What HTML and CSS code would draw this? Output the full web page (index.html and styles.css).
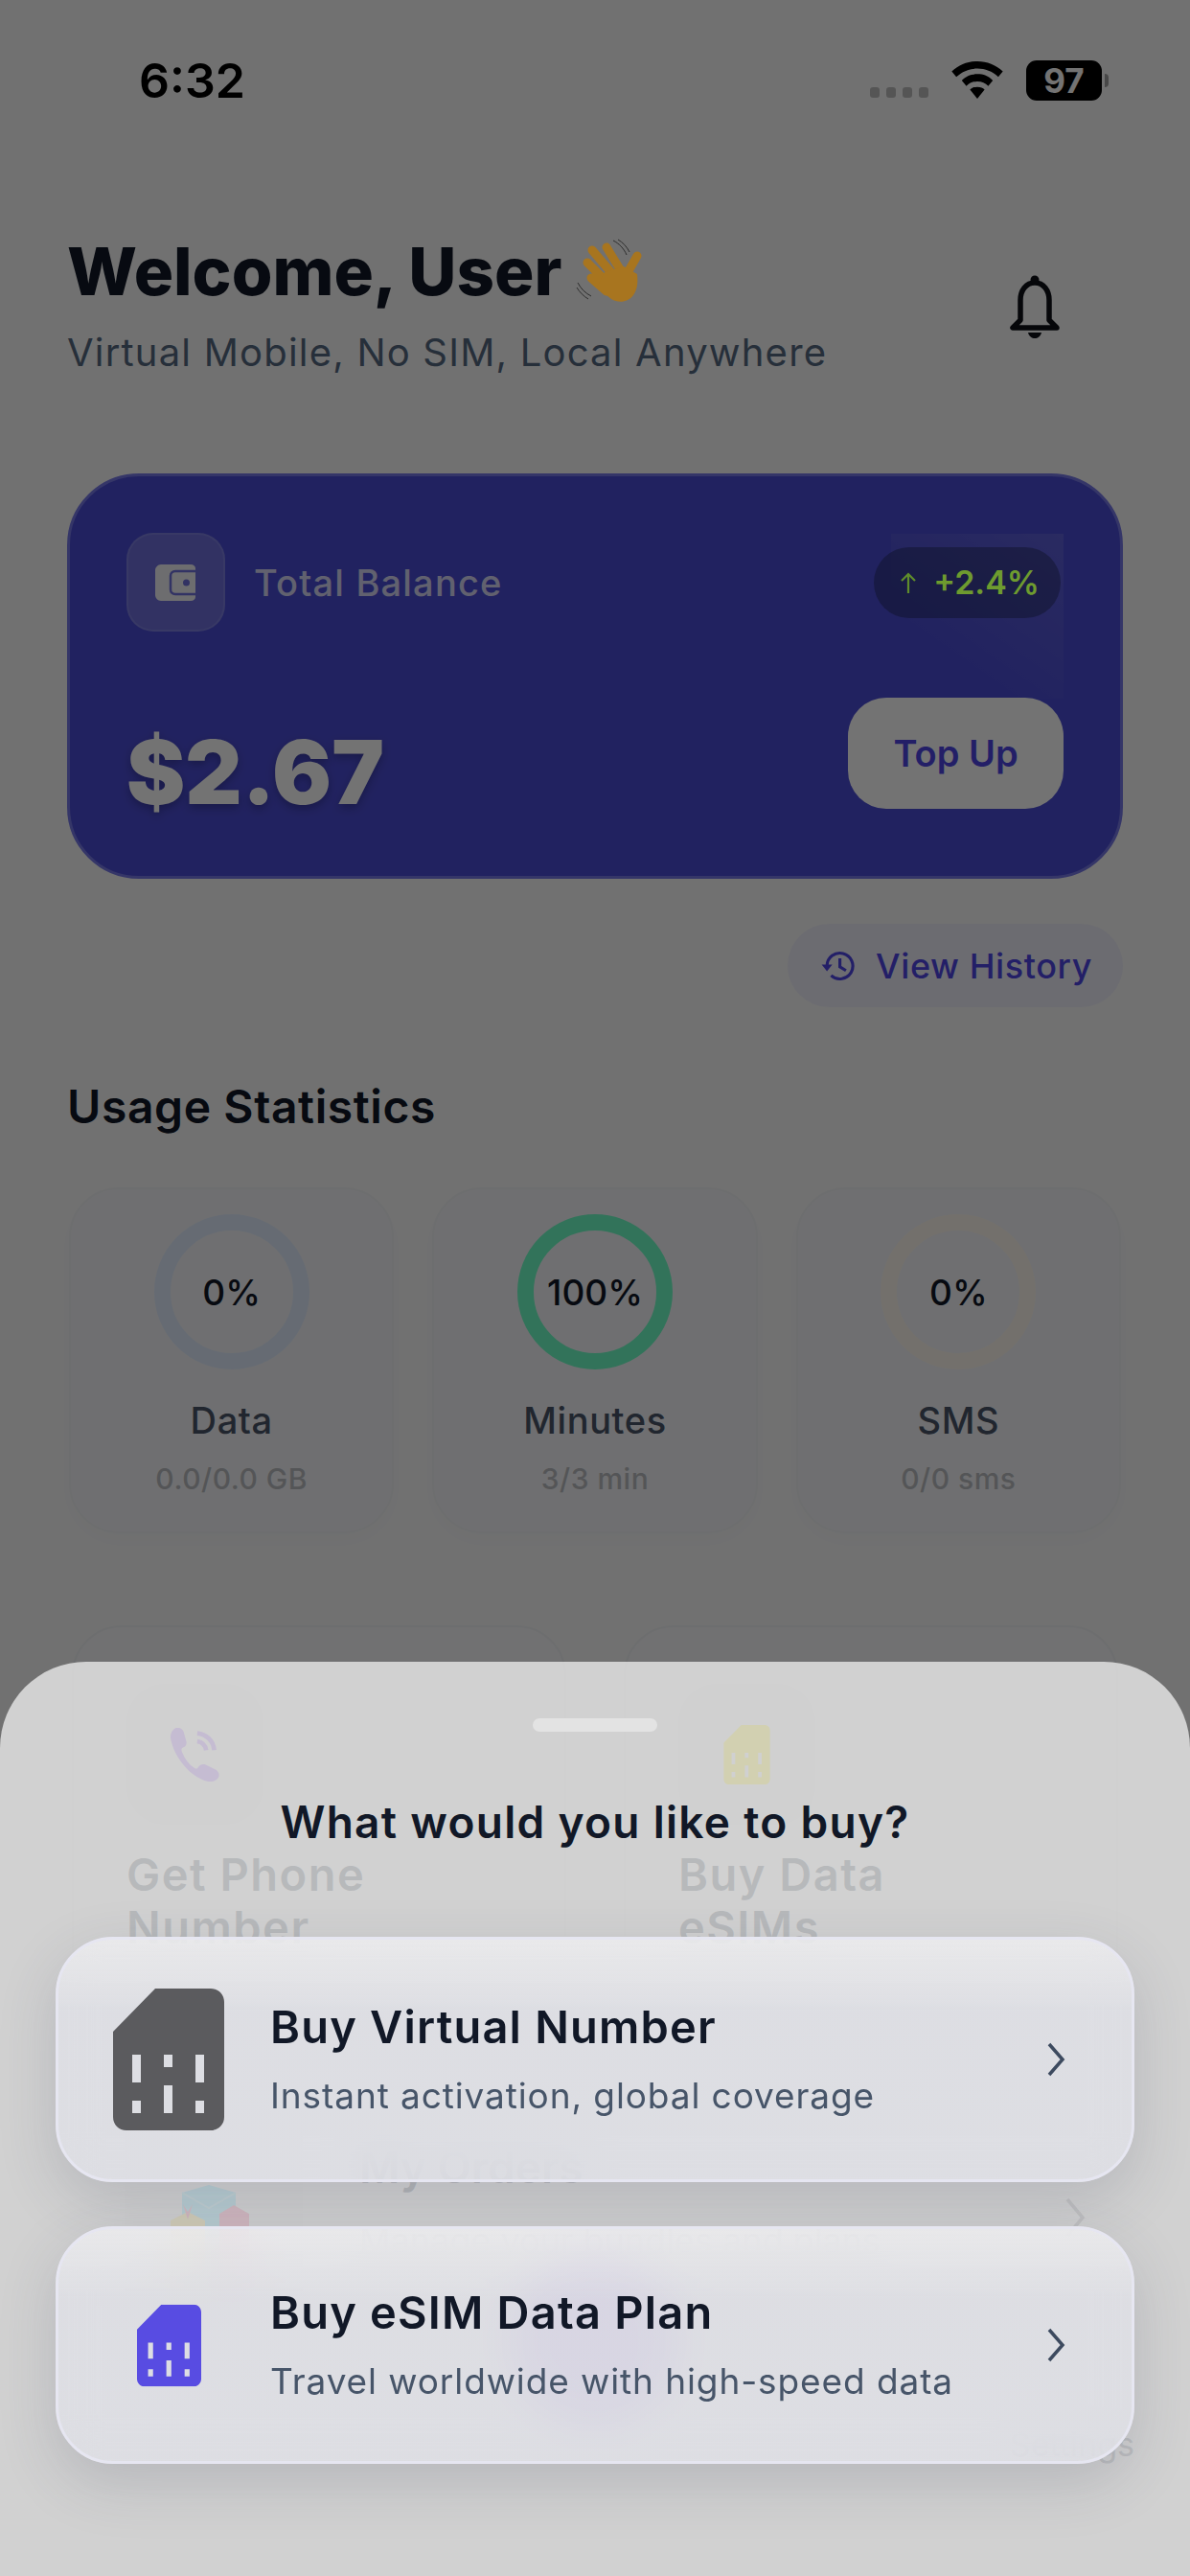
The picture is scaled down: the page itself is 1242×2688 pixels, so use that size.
FILE: index.html
```html
<!DOCTYPE html>
<html lang="en">
<head>
    <meta charset="UTF-8">
    <meta name="viewport" content="width=device-width, initial-scale=1.0">
    <title>Wallet Home</title>
    <link rel="stylesheet" href="styles.css">
</head>
<body>
    <svg class="defs" width="0" height="0">
        <symbol id="sim-shape" viewBox="0 0 116 148">
            <path fill-rule="evenodd" d="M44 0H102C110 0 116 6 116 14V134C116 142 110 148 102 148H14C6 148 0 142 0 134V45zM20 69V98H29V69zM53 69V82H62V69zM86 69V98H95V69zM53 101V130H62V101zM20 117V130H29V117zM86 117V130H95V117z"/>
        </symbol>
    </svg>

    <div class="page">
        <div class="status-bar">
            <span class="status-time">6:32</span>
            <div class="status-icons">
                <div class="signal-dots"><i></i><i></i><i></i><i></i></div>
                <svg class="wifi" viewBox="0 0 56 42"><path d="M28 0C17 0 8 4 0 11l5 6c7-6 14-9 23-9s16 3 23 9l5-6C48 4 39 0 28 0z"/><path d="M28 14c-7 0-12 2-17 7l5 6c3-3 7-5 12-5s9 2 12 5l5-6c-5-5-10-7-17-7z"/><path d="M28 28c-4 0-6 1-8 3l8 10 8-10c-2-2-4-3-8-3z"/></svg>
                <div class="battery"><span class="battery-body">97</span><i class="battery-tip"></i></div>
            </div>
        </div>

        <header class="header">
            <div>
                <h1 class="welcome">Welcome, User
                    <svg class="wave" viewBox="0 0 66 66">
                        <g fill="none" stroke="#a8751f" stroke-width="9" stroke-linecap="round">
                            <path d="M15 11l23 27M30 8l16 26M10 24l22 22M14 40l16 14M62 17l-12 21"/>
                        </g>
                        <path d="M28 34l20-6 14 8c1 10 0 16-4 22-5 7-15 9-23 4L20 50z" fill="#a8751f"/>
                        <path d="M37 1c6 3 11 8 14 15M42 0c5 3 9 7 12 13M0 45c3 6 8 11 14 14M-1 50c3 5 7 9 12 12" fill="none" stroke="#2e2e2e" stroke-width="1"/>
                    </svg>
                </h1>
                <p class="tagline">Virtual Mobile, No SIM, Local Anywhere</p>
            </div>
            <svg class="bell" viewBox="0 0 54 66"><path d="M27 8c-9 0-15 8-15 18v21l-8 8h46l-8-8V26c0-10-6-18-15-18z" fill="none" stroke="#0e1018" stroke-width="5.500" stroke-linejoin="round"/><circle cx="27" cy="5" r="4.500" fill="#0e1018"/><path d="M20 60h14c-1 4-4 6-7 6s-6-2-7-6z" fill="#0e1018"/></svg>
        </header>

        <section class="balance-card">
            <div class="balance-glow"></div>
            <div class="balance-top">
                <div class="wallet-tile">
                    <svg class="wallet-icon" viewBox="0 0 43 38">
                        <path fill-rule="evenodd" d="M6 0h31c3 0 5 2 5 4v30c0 2-2 4-5 4H6c-3 0-6-3-6-6V6c0-3 3-6 6-6zm23 19a3.500 3.500 0 1 0 7 0 3.500 3.500 0 1 0-7 0z"/>
                        <path d="M43 7H21c-3 0-5 2-5 5v14c0 3 2 5 5 5h22" fill="none" stroke="#6f71dd" stroke-width="2.500"/>
                    </svg>
                </div>
                <span class="balance-label">Total Balance</span>
                <span class="trend-pill">
                    <svg class="trend-arrow" viewBox="0 0 20 24"><path d="M10 23V3M3 10l7-7 7 7" fill="none" stroke="#5f8c2b" stroke-width="2.200"/></svg>
                    <span class="trend-value">+2.4%</span>
                </span>
            </div>
            <div class="balance-bottom">
                <span class="balance-amount">$2.67</span>
                <button class="topup-btn">Top Up</button>
            </div>
        </section>

        <div class="history-row">
            <div class="history-btn">
                <svg class="history-icon" viewBox="0 0 24 24"><path d="M4.500 12a8.500 8.500 0 1 1 2.700 6.200" fill="none" stroke="#4f46e5" stroke-width="2"/><path d="M1 11h7l-3.500 4.500z" fill="#4f46e5"/><path d="M13 7v5.500l4 2.500" fill="none" stroke="#4f46e5" stroke-width="2"/></svg>
                View History
            </div>
        </div>

        <h2 class="section-title">Usage Statistics</h2>
        <div class="stats-grid">
            <div class="stat-card">
                <div class="ring ring-data">0%</div>
                <div class="stat-name">Data</div>
                <div class="stat-sub">0.0/0.0 GB</div>
            </div>
            <div class="stat-card">
                <div class="ring ring-minutes">100%</div>
                <div class="stat-name">Minutes</div>
                <div class="stat-sub">3/3 min</div>
            </div>
            <div class="stat-card">
                <div class="ring ring-sms">0%</div>
                <div class="stat-name">SMS</div>
                <div class="stat-sub">0/0 sms</div>
            </div>
        </div>

        <div class="action-grid">
            <div class="action-card">
                <div class="action-tile">
                    <svg class="phone-icon" viewBox="0 0 56 60"><path d="M6 0c4-1 8 1 9 5l3 11c0 3-1 5-4 6-2 1-2 3-1 5 3 8 8 14 14 18 2 1 3 1 4-1 2-3 5-4 8-3l12 6c3 2 4 5 3 8-2 4-7 6-12 5C22 55 4 33 0 11 0 6 2 2 6 0z" fill="#a768ff"/><path d="M30 6c10 1 18 8 19 19M30 15c6 1 9 4 10 10" fill="none" stroke="#a768ff" stroke-width="5"/></svg>
                </div>
                <div class="action-name">Get Phone<br>Number</div>
            </div>
            <div class="action-card">
                <div class="action-tile">
                    <svg class="sim-icon sim-yellow" viewBox="0 0 116 148"><use href="#sim-shape"/></svg>
                </div>
                <div class="action-name">Buy Data<br>eSIMs</div>
            </div>
        </div>

        <div class="list-row">
            <div class="list-tile">
                <svg class="boxes" viewBox="0 0 90 100">
                    <path d="M12 8L40 0l28 8v92H12z" fill="#4cdeff"/>
                    <path d="M12 8l28 16 28-16" fill="none" stroke="#8eeaff" stroke-width="2"/>
                    <path d="M51 30l15-9 16 9v70H51z" fill="#ff5384"/>
                    <path d="M0 37l18-9 18 9v63H0z" fill="#ffde53"/>
                    <path d="M13 20l5 16 5-16-5 8z" fill="#ff5384"/>
                </svg>
            </div>
            <div class="list-text">
                <div class="list-title">My Orders</div>
                <div class="list-sub">Manage your bundles and plans</div>
            </div>
            <svg class="chevron-faint" viewBox="0 0 24 44"><path d="M4 3l16 19L4 41" fill="none" stroke="#8a8a92" stroke-width="3.500"/></svg>
        </div>

        <nav class="bottom-nav">
            <span class="nav-fab"></span>
            <span class="nav-label">Settings</span>
        </nav>
    </div>

    <div class="scrim"></div>

    <section class="sheet">
        <div class="sheet-handle"></div>
        <h3 class="sheet-title">What would you like to buy?</h3>

        <div class="option-card">
            <div class="option-icon">
                <svg class="sim-large" viewBox="0 0 116 148"><use href="#sim-shape"/></svg>
            </div>
            <div class="option-text">
                <div class="option-title">Buy Virtual Number</div>
                <div class="option-sub">Instant activation, global coverage</div>
            </div>
            <svg class="chevron" viewBox="0 0 20 36"><path d="M3 2l14 16L3 34" fill="none" stroke="#3d4a5f" stroke-width="3.500"/></svg>
        </div>

        <div class="option-card">
            <div class="option-icon">
                <svg class="sim-small" viewBox="0 0 116 148"><use href="#sim-shape"/></svg>
            </div>
            <div class="option-text">
                <div class="option-title">Buy eSIM Data Plan</div>
                <div class="option-sub">Travel worldwide with high-speed data</div>
            </div>
            <svg class="chevron" viewBox="0 0 20 36"><path d="M3 2l14 16L3 34" fill="none" stroke="#3d4a5f" stroke-width="3.500"/></svg>
        </div>
    </section>
</body>
</html>
```
FILE: styles.css
```css
* {
    box-sizing: border-box;
}

html {
    overflow: hidden;
}

body {
    margin: 0;
    height: 2688px;
    overflow: hidden;
    position: relative;
    font-family: 'Inter', 'Liberation Sans', sans-serif;
    background: #fbfbfb;
    color: #111827;
}

.defs {
    position: absolute;
    top: 0;
    left: 0;
}

.page {
    height: 2688px;
    overflow: hidden;
    padding: 0 70px;
}

/* Status bar */
.status-bar {
    display: flex;
    justify-content: space-between;
    align-items: center;
    height: 84px;
    margin-top: 42px;
    padding: 0 0 0 75px;
}

.status-time {
    font-size: 50px;
    font-weight: 600;
    color: #000;
}

.status-icons {
    display: flex;
    align-items: center;
    margin-right: 15px;
}

.signal-dots {
    display: flex;
    gap: 7px;
    margin-top: 24px;
    margin-right: 24px;
}

.signal-dots i {
    width: 10px;
    height: 11px;
    border-radius: 3px;
    background: #bdbdbd;
}

.wifi {
    width: 54px;
    height: 40px;
    margin-right: 24px;
}

.battery {
    display: flex;
    align-items: center;
}

.battery-body {
    width: 79px;
    height: 42px;
    border-radius: 11px;
    background: #000;
    color: #fff;
    font-size: 35px;
    font-weight: 700;
    line-height: 42px;
    text-align: center;
}

.battery-tip {
    width: 4px;
    height: 14px;
    margin-left: 3px;
    border-radius: 0 4px 4px 0;
    background: #a0a0a0;
}

/* Header */
.header {
    display: flex;
    justify-content: space-between;
    align-items: flex-end;
    margin-top: 118px;
}

.welcome {
    display: flex;
    align-items: center;
    gap: 17px;
    margin: 0;
    font-size: 69px;
    font-weight: 800;
    line-height: 78px;
    color: #111827;
}

/* emoji keeps its colour through the dim layer */
.wave {
    position: relative;
    z-index: 2;
    width: 66px;
    height: 66px;
    overflow: visible;
}

.tagline {
    margin: 21px 0 0;
    font-size: 40px;
    line-height: 50px;
    letter-spacing: 1.2px;
    color: #566880;
}

.bell {
    width: 54px;
    height: 66px;
    margin-right: 65px;
    margin-bottom: 40px;
}

/* Balance card */
.balance-card {
    position: relative;
    height: 423px;
    margin-top: 101px;
    padding: 59px 59px 0;
    border: 3px solid #7779e6;
    border-radius: 75px;
    background: #4b4dd4;
}

.balance-glow {
    position: absolute;
    top: 60px;
    right: 59px;
    width: 180px;
    height: 172px;
    background: linear-gradient(215deg, rgba(255, 255, 255, 0.1), rgba(255, 255, 255, 0) 70%);
}

.balance-top {
    position: relative;
    display: flex;
    align-items: center;
}

.wallet-tile {
    display: flex;
    align-items: center;
    justify-content: center;
    width: 103px;
    height: 103px;
    border: 2px solid rgba(255, 255, 255, 0.1);
    border-radius: 28px;
    background: rgba(255, 255, 255, 0.2);
}

.wallet-icon {
    width: 43px;
    height: 38px;
    fill: #f2f2f5;
}

.balance-label {
    margin-left: 30px;
    font-size: 38px;
    font-weight: 500;
    letter-spacing: 1.2px;
    color: rgba(255, 255, 255, 0.8);
}

.trend-pill {
    display: flex;
    align-items: center;
    gap: 16px;
    margin-left: auto;
    margin-right: 3px;
    height: 74px;
    padding: 0 22px 0 26px;
    border-radius: 37px;
    background: rgba(15, 23, 42, 0.35);
    font-size: 34px;
    font-weight: 600;
}

/* brighter than the dim layer would allow */
.trend-value {
    position: relative;
    z-index: 2;
    color: #6e9b2f;
}

.trend-arrow {
    position: relative;
    z-index: 2;
    width: 20px;
    height: 24px;
}

.balance-bottom {
    position: relative;
    display: flex;
    justify-content: space-between;
    align-items: flex-start;
    margin-top: 69px;
}

.balance-amount {
    margin-top: 30px;
    font-size: 92px;
    font-weight: 900;
    line-height: 96px;
    color: #fff;
    text-shadow: 0 4px 10px rgba(0, 0, 0, 0.25);
}

.topup-btn {
    width: 225px;
    height: 116px;
    border: none;
    border-radius: 40px;
    background: #fff;
    font-family: inherit;
    font-size: 38px;
    font-weight: 600;
    color: #4f46e5;
}

/* View history */
.history-row {
    display: flex;
    justify-content: flex-end;
    margin-top: 47px;
}

.history-btn {
    display: flex;
    align-items: center;
    gap: 20px;
    height: 87px;
    padding: 0 32px 0 34px;
    border-radius: 44px;
    background: #f0f0fb;
    font-size: 36px;
    font-weight: 500;
    letter-spacing: 0.6px;
    color: #4f46e5;
}

.history-icon {
    width: 38px;
    height: 38px;
}

/* Usage statistics */
.section-title {
    margin: 76px 0 0;
    font-size: 48px;
    font-weight: 600;
    line-height: 56px;
    letter-spacing: 0.6px;
    color: #111827;
}

.stats-grid {
    display: grid;
    grid-template-columns: repeat(3, 1fr);
    gap: 40px;
    margin-top: 56px;
    padding: 0 2px;
}

.stat-card {
    display: flex;
    flex-direction: column;
    align-items: center;
    height: 361px;
    padding-top: 26px;
    border: 2px solid #f2f3f6;
    border-radius: 52px;
    background: #f6f7fa;
    box-shadow: 0 8px 24px rgba(60, 70, 110, 0.025);
}

.ring {
    display: flex;
    align-items: center;
    justify-content: center;
    width: 162px;
    height: 162px;
    border: 17px solid;
    border-radius: 50%;
    font-size: 37px;
    font-weight: 500;
    color: #111827;
}

.ring-data {
    border-color: #e3eeff;
}

.ring-minutes {
    border-color: #70ffc8;
}

.ring-sms {
    border-color: #fff9f0;
}

.stat-name {
    margin-top: 28px;
    font-size: 38px;
    font-weight: 500;
    line-height: 50px;
    letter-spacing: 0.6px;
    color: #4a5568;
}

.stat-sub {
    margin-top: 18px;
    font-size: 30px;
    font-weight: 500;
    line-height: 36px;
    letter-spacing: 0.5px;
    color: #bbbcc0;
}

/* Actions behind the sheet */
.action-grid {
    display: grid;
    grid-template-columns: 1fr 1fr;
    gap: 60px;
    margin-top: 96px;
    padding: 0 5px;
}

.action-card {
    height: 500px;
    padding: 59px 55px 0;
    border: 2px solid #f2f3f6;
    border-radius: 52px;
    background: #fafafc;
}

.action-tile {
    display: flex;
    align-items: center;
    justify-content: center;
    width: 143px;
    height: 147px;
    border-radius: 40px;
    background: #f4f4f6;
}

.phone-icon {
    width: 58px;
    height: 56px;
}

.sim-icon {
    width: 51px;
    height: 62px;
}

.sim-yellow {
    fill: #fff020;
}

.action-name {
    margin-top: 24px;
    font-size: 47px;
    font-weight: 600;
    line-height: 55px;
    letter-spacing: 1.5px;
    color: #4b5563;
}

.list-row {
    display: flex;
    align-items: center;
    height: 184px;
    margin-top: 26px;
    padding: 0 38px 0 60px;
}

.list-tile {
    display: flex;
    justify-content: center;
    flex: none;
    width: 186px;
    height: 184px;
    padding-top: 58px;
    background: #f3f3f6;
}

.boxes {
    width: 90px;
    height: 100px;
}

.list-text {
    flex: 1;
    margin-left: 59px;
    padding-bottom: 30px;
}

.list-title {
    font-size: 46px;
    font-weight: 600;
    line-height: 56px;
    color: #374151;
}

.list-sub {
    margin-top: 21px;
    font-size: 36px;
    line-height: 56px;
    color: #6b7280;
}

.chevron-faint {
    width: 24px;
    height: 44px;
    flex: none;
}

.bottom-nav {
    position: absolute;
    left: 0;
    right: 0;
    top: 2340px;
}

.nav-fab {
    position: absolute;
    left: 530px;
    top: 12px;
    width: 180px;
    height: 180px;
    border-radius: 50%;
    background: #7a3cf0;
}

.nav-label {
    position: absolute;
    right: 58px;
    top: 190px;
    font-size: 34px;
    color: #6b7280;
}

/* Dimmed overlay and sheet */
.scrim {
    position: absolute;
    inset: 0;
    z-index: 1;
    background: rgba(0, 0, 0, 0.55);
}

.sheet {
    position: absolute;
    left: 0;
    right: 0;
    top: 1734px;
    bottom: 0;
    z-index: 3;
    display: flex;
    flex-direction: column;
    padding: 59px 58px 0;
    border-radius: 90px 90px 0 0;
    background: rgba(255, 255, 255, 0.68);
}

.sheet-handle {
    align-self: center;
    width: 130px;
    height: 14px;
    border-radius: 7px;
    background: #e3e3e3;
}

.sheet-title {
    margin: 66px 0 0;
    font-size: 46px;
    font-weight: 600;
    line-height: 56px;
    letter-spacing: 1.3px;
    text-align: center;
    color: #111827;
}

.option-card {
    display: flex;
    align-items: center;
    padding: 51px 57px;
    border: 3px solid #e6e6f1;
    border-radius: 60px;
    background: linear-gradient(180deg, rgba(240, 240, 242, 0.78), rgba(226, 227, 234, 0.72) 30%);
    backdrop-filter: blur(22px);
    box-shadow: 0 20px 60px rgba(60, 64, 90, 0.18);
}

.option-card + .option-card {
    margin-top: 46px;
}

.sheet-title + .option-card {
    margin-top: 92px;
}

.option-icon {
    display: flex;
    justify-content: center;
    flex: none;
    width: 116px;
    margin-right: 48px;
}

.sim-large {
    width: 116px;
    height: 148px;
    fill: #5b5b5e;
}

.sim-small {
    width: 67px;
    height: 87px;
    fill: #584ce2;
}

.option-text {
    flex: 1;
    display: flex;
    flex-direction: column;
    justify-content: center;
    min-height: 140px;
}

.option-title {
    font-size: 47px;
    font-weight: 600;
    line-height: 58px;
    letter-spacing: 1.2px;
    color: #111827;
}

.option-sub {
    margin-top: 18px;
    font-size: 37px;
    line-height: 50px;
    letter-spacing: 0.9px;
    color: #475569;
}

.chevron {
    width: 20px;
    height: 36px;
    flex: none;
    margin-right: 12px;
}
```
